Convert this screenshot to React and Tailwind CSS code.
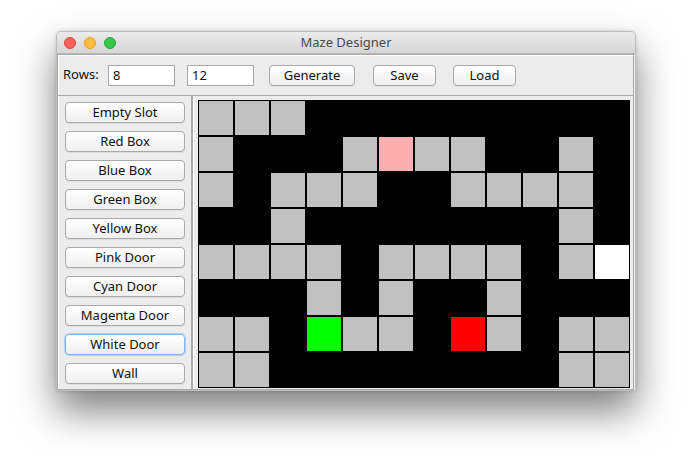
import React from "react";

const G = "bg-[#c0c0c0]";
const B = "bg-black";
const P = "bg-[#ffafaf]";
const GR = "bg-[#00ff00]";
const R = "bg-[#ff0000]";
const W = "bg-white";

const maze = [
  [G, G, G, B, B, B, B, B, B, B, B, B],
  [G, B, B, B, G, P, G, G, B, B, G, B],
  [G, B, G, G, G, B, B, G, G, G, G, B],
  [B, B, G, B, B, B, B, B, B, B, G, B],
  [G, G, G, G, B, G, G, G, G, B, G, W],
  [B, B, B, G, B, G, B, B, G, B, B, B],
  [G, G, B, GR, G, G, B, R, G, B, G, G],
  [G, G, B, B, B, B, B, B, B, B, G, G],
];

const tools = [
  "Empty Slot",
  "Red Box",
  "Blue Box",
  "Green Box",
  "Yellow Box",
  "Pink Door",
  "Cyan Door",
  "Magenta Door",
  "White Door",
  "Wall",
];

function AquaButton({ children, className = "", focused = false }) {
  return (
    <button
      className={
        "h-[21px] rounded-[4px] bg-gradient-to-b from-white to-[#efefef] text-[13px] leading-none text-[#111] flex items-center justify-center " +
        (focused
          ? "border border-[#7fb2e8] shadow-[0_0_0_1px_#b4d3f4]"
          : "border border-[#a9a9a9] shadow-[0_1px_0_rgba(0,0,0,0.06)]") +
        " " +
        className
      }
    >
      {children}
    </button>
  );
}

export default function App() {
  return (
    <div
      className="w-[692px] h-[472px] bg-white pl-[56px] pt-[31px]"
      style={{ fontFamily: '"Noto Sans", "DejaVu Sans", sans-serif' }}
    >
      <div className="w-[580px] h-[360px] flex flex-col bg-[#ececec] rounded-t-[5px] border border-[#bdbdbd] shadow-[0_20px_38px_rgba(0,0,0,0.5),0_0_4px_rgba(0,0,0,0.15)] overflow-hidden">
        {/* title bar */}
        <div className="h-[22px] shrink-0 relative flex items-center justify-center bg-gradient-to-b from-[#ebebeb] to-[#d6d6d6] border-b border-[#b9b9b9]">
          <div className="absolute left-[7px] top-[5px] flex gap-[8px]">
            <span className="w-3 h-3 rounded-full bg-[#fc605c] border border-[#e0443e]" />
            <span className="w-3 h-3 rounded-full bg-[#fdbc40] border border-[#dea123]" />
            <span className="w-3 h-3 rounded-full bg-[#34c84a] border border-[#24a732]" />
          </div>
          <span className="text-[13px] text-[#4a4a4a]">Maze Designer</span>
        </div>

        {/* toolbar */}
        <div className="h-[42px] shrink-0 flex items-center pl-[5px] pr-2 border border-[#a9a9a9] shadow-[inset_1px_1px_0_#fff] mr-px">
          <span className="text-[13px] text-[#111] w-[36px]">Rows:</span>
          <input
            defaultValue="8"
            className="ml-[9px] w-[67px] h-[21px] bg-white border border-[#a8a8a8] px-[4px] text-[13px] text-[#111] outline-none"
          />
          <input
            defaultValue="12"
            className="ml-[12px] w-[67px] h-[21px] bg-white border border-[#a8a8a8] px-[4px] text-[13px] text-[#111] outline-none"
          />
          <AquaButton className="ml-[15px] w-[86px]">Generate</AquaButton>
          <AquaButton className="ml-[18px] w-[63px]">Save</AquaButton>
          <AquaButton className="ml-[17px] w-[63px]">Load</AquaButton>
        </div>

        {/* body */}
        <div className="flex flex-1 min-h-0">
          <div className="w-[135px] shrink-0 flex flex-col gap-[8px] pl-[7px] pr-[5px] pt-[6px] border border-[#a9a9a9] border-t-0 shadow-[inset_1px_0_0_#fff]">
            {tools.map((t) => (
              <AquaButton key={t} className="w-[120px]" focused={t === "White Door"}>
                {t}
              </AquaButton>
            ))}
          </div>
          <div className="flex-1 pl-[6px] pt-[4px] border border-[#a9a9a9] border-t-0 border-l-0 shadow-[inset_1px_0_0_#a9a9a9,inset_2px_0_0_#fff] mr-px">
            <div className="grid grid-cols-[repeat(12,36px)] w-[432px]">
              {maze.map((row, r) =>
                row.map((c, i) => (
                  <div key={r + "-" + i} className={"w-9 h-9 border border-black " + c} />
                ))
              )}
            </div>
          </div>
        </div>
      </div>
    </div>
  );
}
